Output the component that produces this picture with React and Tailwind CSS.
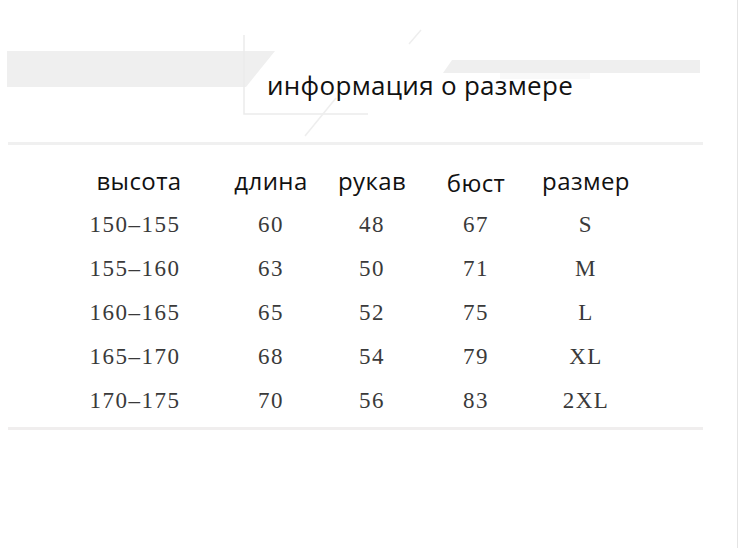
const rows = [
  ['150–155', '60', '48', '67', 'S'],
  ['155–160', '63', '50', '71', 'M'],
  ['160–165', '65', '52', '75', 'L'],
  ['165–170', '68', '54', '79', 'XL'],
  ['170–175', '70', '56', '83', '2XL'],
];

const heads = ['высота', 'длина', 'рукав', 'бюст', 'размер'];

function HeaderArt() {
  return (
    <svg className="absolute inset-0" width="738" height="142" viewBox="0 0 738 142">
      <polygon points="7,51 275,51 246,87 7,87" fill="#efefef" />
      <polyline points="244,35 244,114 368,114" fill="none" stroke="#ebebeb" strokeWidth="1.5" />
      <line x1="421" y1="30" x2="409" y2="44" stroke="#eeeeee" strokeWidth="1.5" />
      <line x1="336" y1="98" x2="305" y2="136" stroke="#eeeeee" strokeWidth="1.5" />
      <polygon points="452,60 700,60 700,73 443,73" fill="#efefef" />
      <rect x="500" y="73" width="90" height="6" fill="#f9f9f9" />
    </svg>
  );
}

export default function App() {
  return (
    <div className="w-[738px] h-[548px] bg-white border-r border-[#e4e4e4] overflow-hidden">
      <div className="relative h-[142px]">
        <HeaderArt />
        <div className="relative pt-[69px] pl-[267px] text-[26px] leading-[32px] text-[#111] font-['Open_Sans',sans-serif] tracking-[0.3px]">
          информация о размере
        </div>
      </div>
      <div className="ml-[8px] w-[695px] h-[3px] bg-[#f0f0f0]" />

      <div className="pt-[16px] pl-[70px]">
        <div className="grid grid-cols-[130px_142px_60px_148px_72px] h-[42px] pb-[2px] items-center text-[24px] text-[#111] font-['Open_Sans',sans-serif] tracking-[0.4px]">
          {heads.map((h, i) => (
            <div
              key={h}
              className={
                'flex justify-center whitespace-nowrap ' +
                (i === 0 ? 'pl-[8px]' : '') +
                (i === 3 ? 'pt-[4px]' : '')
              }
            >
              {h}
            </div>
          ))}
        </div>
        {rows.map((r) => (
          <div
            key={r[0]}
            className="grid grid-cols-[130px_142px_60px_148px_72px] h-[44px] items-center text-[23px] text-[#3a3a3a] font-['Liberation_Serif',serif] tracking-[1.5px]"
          >
            {r.map((c, i) => (
              <div key={i} className="flex justify-center whitespace-nowrap">
                {c}
              </div>
            ))}
          </div>
        ))}
      </div>

      <div className="ml-[8px] mt-[4px] w-[695px] h-[3px] bg-[#f0eeee]" />
    </div>
  );
}
